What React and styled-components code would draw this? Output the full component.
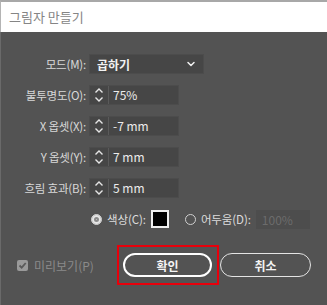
import React from "react";
import styled, { createGlobalStyle } from "styled-components";
import { ChevronDown } from "lucide-react";

const GlobalStyle = createGlobalStyle`
  html, body {
    margin: 0;
    padding: 0;
    background: #535353;
    font-family: "Noto Sans CJK KR", "Noto Sans", sans-serif;
  }
`;

const fields = [
  { label: "불투명도(O):", value: "75%" },
  { label: "X 옵셋(X):", value: "-7 mm" },
  { label: "Y 옵셋(Y):", value: "7 mm" },
  { label: "흐림 효과(B):", value: "5 mm" },
];

const Spinner = () => (
  <svg width="10" height="16" viewBox="0 0 10 16" fill="none">
    <path d="M1.5 5.5 L5 2 L8.5 5.5" stroke="#e6e6e6" strokeWidth="1.4" />
    <path d="M1.5 10.5 L5 14 L8.5 10.5" stroke="#e6e6e6" strokeWidth="1.4" />
  </svg>
);

const App = () => {
  return (
    <Window>
      <GlobalStyle />
      <TitleBar>그림자 만들기</TitleBar>
      <Body>
        <Form>
          <Label>모드(M):</Label>
          <Select>
            <span>곱하기</span>
            <ChevronDown size={12} strokeWidth={3} color="#f0f0f0" />
          </Select>
          {fields.map((f) => (
            <React.Fragment key={f.label}>
              <Label>{f.label}</Label>
              <NumberInput>
                <SpinBox>
                  <Spinner />
                </SpinBox>
                <Value>{f.value}</Value>
              </NumberInput>
            </React.Fragment>
          ))}
          <ColorRow>
            <Radio checked />
            <RadioLabel>색상(C):</RadioLabel>
            <Swatch />
            <Radio />
            <RadioLabel>어두움(D):</RadioLabel>
            <DisabledInput>100%</DisabledInput>
          </ColorRow>
        </Form>
        <Footer>
          <Preview>
            <CheckBox>
              <svg width="9" height="9" viewBox="0 0 9 9" fill="none">
                <path d="M1.5 4.5 L3.7 6.7 L7.7 2" stroke="#5a5a5a" strokeWidth="1.8" />
              </svg>
            </CheckBox>
            미리보기(P)
          </Preview>
          <Focus>
            <Button primary>확인</Button>
          </Focus>
          <Button>취소</Button>
        </Footer>
      </Body>
    </Window>
  );
};

export default App;

const Window = styled.div`
  width: 327px;
  height: 305px;
  display: flex;
  flex-direction: column;
  overflow: hidden;
`;

const TitleBar = styled.div`
  height: 30px;
  border-top: 2px solid #a8a8a8;
  border-left: 1px solid #b4b4b4;
  background: #ffffff;
  color: #858585;
  font-size: 13px;
  line-height: 30px;
  padding-left: 8px;
`;

const Body = styled.div`
  flex: 1;
  background: #535353;
  border-left: 1px solid #6a6a6a;
  padding-top: 22px;
`;

const Form = styled.div`
  display: grid;
  grid-template-columns: 85px auto;
  column-gap: 3px;
  row-gap: 11px;
  align-items: center;
`;

const Label = styled.div`
  text-align: right;
  color: #d8d8d8;
  font-size: 11.5px;
  letter-spacing: -0.2px;
  line-height: 20px;
  white-space: nowrap;
`;

const Select = styled.div`
  width: 100px;
  height: 18px;
  display: flex;
  align-items: center;
  justify-content: space-between;
  padding: 0 6px 0 7px;
  border: 1px solid #4c4c4c;
  background: #464646;
  color: #f2f2f2;
  font-size: 12px;
  font-weight: 700;
`;

const NumberInput = styled.div`
  width: 88px;
  height: 18px;
  display: flex;
  align-items: stretch;
  border: 1px solid #4c4c4c;
  background: #464646;
`;

const SpinBox = styled.div`
  width: 18px;
  display: flex;
  align-items: center;
  justify-content: center;
  border-right: 1px solid #5a5a5a;
`;

const Value = styled.div`
  padding-left: 4px;
  color: #ececec;
  font-size: 12px;
  line-height: 18px;
`;

const ColorRow = styled.div`
  grid-column: 2;
  margin-left: 2px;
  display: flex;
  align-items: center;
  height: 20px;
`;

const Radio = styled.div`
  width: 9px;
  height: 9px;
  border-radius: 50%;
  border: 1px solid #d0d0d0;
  background: ${(p) => (p.checked ? "#d0d0d0" : "transparent")};
  box-shadow: ${(p) => (p.checked ? "inset 0 0 0 2px #e6e6e6, inset 0 0 0 4px #8a8a8a" : "none")};
  margin-right: 5px;
`;

const RadioLabel = styled.span`
  color: #dcdcdc;
  font-size: 11.5px;
  letter-spacing: -0.1px;
  line-height: 20px;
  margin-right: 5px;
  white-space: nowrap;
`;

const Swatch = styled.div`
  width: 14px;
  height: 14px;
  background: #000;
  border: 2px solid #f0f0f0;
  margin-right: 16px;
`;

const DisabledInput = styled.div`
  width: 48px;
  height: 19px;
  padding-left: 6px;
  background: #4d4d4d;
  color: #6c6c6c;
  font-size: 12px;
  line-height: 19px;
`;

const Footer = styled.div`
  display: flex;
  align-items: center;
  margin-top: 16px;
  padding-left: 16px;
`;

const Preview = styled.div`
  width: 100px;
  display: flex;
  align-items: center;
  gap: 6px;
  color: #8a8a8a;
  font-size: 12px;
`;

const CheckBox = styled.div`
  width: 11px;
  height: 11px;
  border-radius: 2px;
  background: #9a9a9a;
  display: flex;
  align-items: center;
  justify-content: center;
`;

const Focus = styled.div`
  border: 2px solid #e8000b;
  padding: 6px 5px 6px 4px;
  margin-right: 1px;
`;

const Button = styled.div`
  width: ${(p) => (p.primary ? "85px" : "89px")};
  height: ${(p) => (p.primary ? "20px" : "22px")};
  border: ${(p) => (p.primary ? "2px solid #ffffff" : "1.5px solid #e4e4e4")};
  border-radius: 13px;
  display: flex;
  align-items: center;
  justify-content: center;
  color: #f4f4f4;
  font-size: 12px;
  font-weight: 700;
`;
